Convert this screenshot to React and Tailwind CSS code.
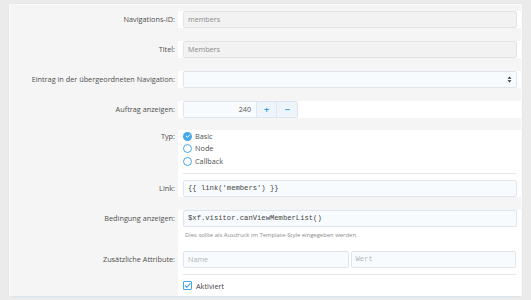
import React from "react";

const SANS = "font-['Open_Sans','Noto_Sans',sans-serif]";
const MONO = "font-['Liberation_Mono','DejaVu_Sans_Mono',monospace]";

function Row({ label, children, className = "", labelClass = "" }) {
  return (
    <div className={`grid grid-cols-[168px_1fr] ${className}`}>
      <div className={`bg-[#f5f5f5] text-right pr-[3px] text-[#4f4f4f] text-[7.3px] ${labelClass}`}>
        {label}
      </div>
      <div className="bg-white pl-[5px] pr-[4px]">{children}</div>
    </div>
  );
}

function Radio({ checked, label }) {
  return (
    <div className="flex items-center gap-[3px] h-[12.5px]">
      {checked ? (
        <span className="w-[9px] h-[9px] rounded-full bg-[#47a7eb] flex items-center justify-center">
          <svg width="6" height="6" viewBox="0 0 12 12">
            <path d="M2.5 6.2 L5 8.6 L9.6 3.6" fill="none" stroke="#fff" strokeWidth="2" strokeLinecap="round" strokeLinejoin="round" />
          </svg>
        </span>
      ) : (
        <span className="w-[9px] h-[9px] rounded-full border-[1.2px] border-[#47a7eb] bg-white" />
      )}
      <span className="text-[#505050] text-[7.3px]">{label}</span>
    </div>
  );
}

export default function App() {
  const inputBase = "h-[17px] w-full rounded-[2px] border flex items-center px-[4px]";
  const readOnly = `${inputBase} bg-[#f2f2f2] border-[#e3e3e3] text-[#8a8a8a] text-[7.2px]`;
  const editable = `${inputBase} bg-[#f8fbfd] border-[#dfe5eb] text-[#444] text-[7.2px]`;

  return (
    <div className={`w-[531px] h-[300px] bg-[#ebebeb] pt-[4px] pl-[9px] pr-[9px] ${SANS}`}>
      <div className="bg-[#f5f5f5] border border-[#fbfbfb] border-b-[#dde5ec] shadow-[0_0_1px_rgba(0,0,0,0.08)] h-[293px] flex flex-col">
        <Row label="Navigations-ID:" className="pt-[6px] pb-[13px]" labelClass="leading-[17px]">
          <div className={readOnly}>members</div>
        </Row>
        <Row label="Titel:" className="pb-[13px]" labelClass="leading-[17px]">
          <div className={readOnly}>Members</div>
        </Row>
        <Row label="Eintrag in der übergeordneten Navigation:" className="pb-[13px]" labelClass="leading-[17px]">
          <div className={`${editable} justify-end`}>
            <svg width="5" height="7" viewBox="0 0 10 14">
              <path d="M5 1 L9 5.5 H1 Z M5 13 L9 8.5 H1 Z" fill="#333" />
            </svg>
          </div>
        </Row>
        <Row label="Auftrag anzeigen:" className="pb-[12px]" labelClass="leading-[17px]">
          <div className="flex h-[17px] w-[115px] rounded-[2px] border border-[#dfe5eb] overflow-hidden">
            <div className="flex-1 bg-[#f8fbfd] text-right pr-[5px] text-[#555] text-[7.2px] leading-[15px]">240</div>
            <div className="w-[20px] bg-[#edf4fa] border-l border-[#dfe8f0] flex items-center justify-center text-[#3a9be5] font-bold text-[9px] leading-none">+</div>
            <div className="w-[21px] bg-[#edf4fa] border-l border-[#dfe8f0] flex items-center justify-center text-[#3a9be5] font-bold text-[9px] leading-none">−</div>
          </div>
        </Row>
        <Row label="Typ:" labelClass="leading-[12.5px]">
          <div className="pb-[5px] border-b border-[#e6e6e6] mr-[1px]">
            <Radio checked label="Basic" />
            <Radio label="Node" />
            <Radio label="Callback" />
          </div>
        </Row>
        <Row label="Link:" className="pb-[13px]" labelClass="leading-[17px] pt-[6px]">
          <div className={`${editable} ${MONO} text-[6.5px] text-[#333] mt-[6px]`}>{"{{ link('members') }}"}</div>
        </Row>
        <Row label="Bedingung anzeigen:" labelClass="leading-[17px]">
          <div className={`${editable} ${MONO} text-[6.5px] text-[#333]`}>$xf.visitor.canViewMemberList()</div>
          <div className="text-[5.9px] text-[#8c8c8c] pl-[2px] pt-[4px] pb-[12px] leading-[8px]">
            Dies sollte als Ausdruck im Template-Style eingegeben werden.
          </div>
        </Row>
        <Row label="Zusätzliche Attribute:" labelClass="leading-[17px]">
          <div className="flex gap-[2px] pb-[6px] border-b border-[#e6e6e6] mr-[1px]">
            <div className={`${editable} text-[#b5b5b5] text-[6.2px]`}>Name</div>
            <div className={`${editable} ${MONO} text-[#b5b5b5] text-[6.2px]`}>Wert</div>
          </div>
        </Row>
        <Row label="" className="flex-1">
          <div className="flex items-center gap-[4px] pt-[6px]">
            <span className="w-[9px] h-[9px] border border-[#47a7eb] rounded-[1px] bg-white flex items-center justify-center">
              <svg width="7" height="7" viewBox="0 0 12 12">
                <path d="M2.2 6.3 L5 9 L10.5 2.8" fill="none" stroke="#3a9be5" strokeWidth="1.8" strokeLinecap="round" strokeLinejoin="round" />
              </svg>
            </span>
            <span className="text-[#444] text-[7.3px]">Aktiviert</span>
          </div>
        </Row>
      </div>
    </div>
  );
}
